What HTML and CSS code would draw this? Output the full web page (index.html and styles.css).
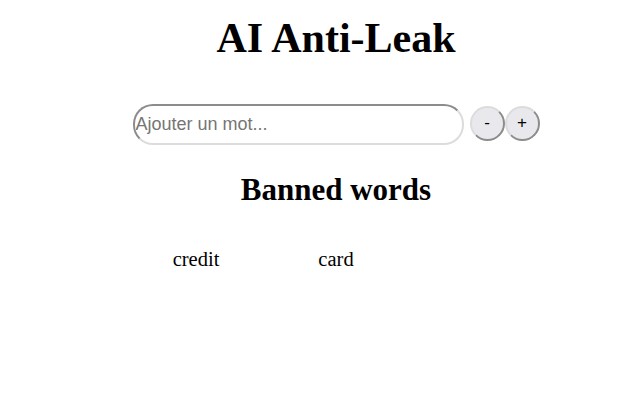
FILE: index.html
```html
<!DOCTYPE html>
<html lang="fr">
<head>
<meta charset="utf-8">
<title>AI Anti-Leak</title>
<link rel="stylesheet" href="styles.css">
</head>
<body>
<main class="app">
  <h1 class="title">AI Anti-Leak</h1>
  <form class="add-row">
    <input class="word-input" type="text" placeholder="Ajouter un mot...">
    <button class="round-btn" type="button">-</button>
    <button class="round-btn" type="button">+</button>
  </form>
  <h2 class="subtitle">Banned words</h2>
  <ul class="word-list">
    <li class="word">credit</li>
    <li class="word">card</li>
  </ul>
</main>
</body>
</html>
```
FILE: styles.css
```css
html, body {
  background: #ffffff;
}
body {
  margin: 0;
  font-family: "Liberation Serif", "Times New Roman", serif;
  color: #000;
}
.app {
  padding: 0 0 0 32px;
  margin: 0 8px;
}
.title {
  margin: 0;
  padding-top: 14px;
  font-size: 42px;
  font-weight: bold;
  text-align: center;
}
.add-row {
  display: flex;
  justify-content: center;
  align-items: center;
  margin-top: 42px;
}
.word-input {
  box-sizing: border-box;
  width: 331px;
  height: 41px;
  padding: 0 1px;
  border: 2px solid;
  border-color: #8c8c8c #dcdcdc #dcdcdc #8c8c8c;
  border-radius: 20px;
  font-family: "Liberation Sans", Arial, sans-serif;
  font-size: 18px;
  background: #fff;
  outline: none;
}
.word-input::placeholder {
  color: #757575;
}
.round-btn {
  box-sizing: border-box;
  width: 35px;
  height: 35px;
  margin: -3px 0 0 0;
  padding: 0;
  border: 2px solid;
  border-color: #dcdcdc #8c8c8c #8c8c8c #dcdcdc;
  border-radius: 50%;
  background: #e9e9ed;
  font-family: "Liberation Sans", Arial, sans-serif;
  font-size: 17px;
  color: #000;
}
.round-btn:first-of-type {
  margin-left: 6px;
}
.subtitle {
  margin: 27px 0 0;
  font-size: 31px;
  font-weight: bold;
  text-align: center;
}
.word-list {
  list-style: none;
  margin: 40px 0 0;
  padding: 0;
  display: grid;
  grid-template-columns: repeat(3, 140px);
  justify-content: center;
  font-size: 20.5px;
}
.word {
  text-align: center;
}
```
